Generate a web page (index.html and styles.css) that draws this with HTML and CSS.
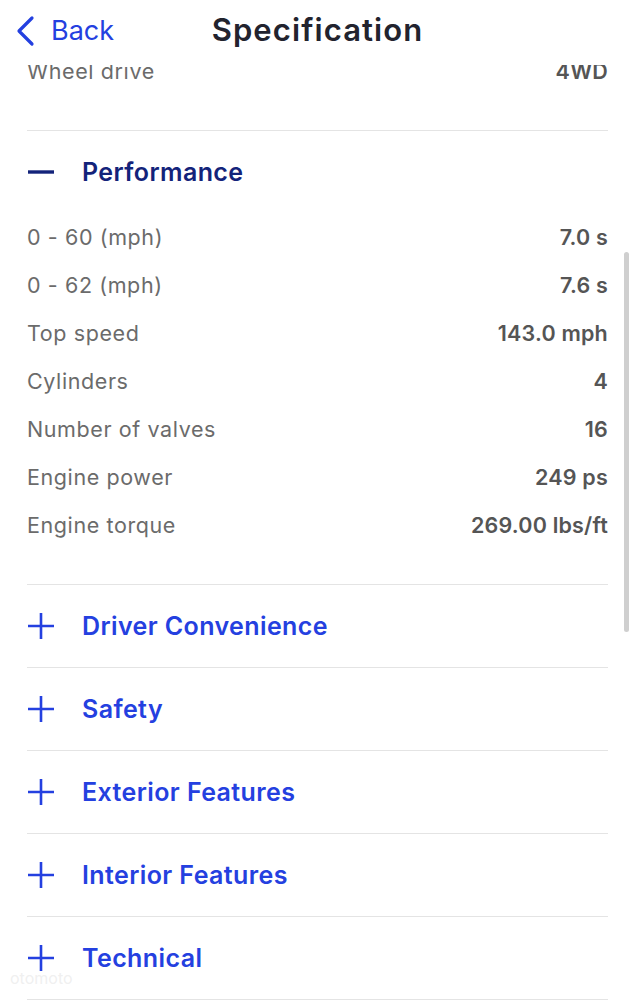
FILE: index.html
```html
<!DOCTYPE html>
<html lang="en">
<head>
  <meta charset="UTF-8">
  <title>Specification</title>
  <link rel="stylesheet" href="styles.css">
</head>
<body>

  <!-- top bar -->
  <div class="topbar">
    <a class="back" href="#">
      <svg width="22" height="32" viewBox="0 0 22 32"><path d="M18 3 L5 16 L18 29" fill="none" stroke="#2440e0" stroke-width="3.2" stroke-linecap="round" stroke-linejoin="round"/></svg>
      <span>Back</span>
    </a>
    <h1>Specification</h1>
  </div>

  <div class="content">
    <div class="list">

      <div class="section">
        <div class="rows">
          <div class="row"><span>Wheel drive</span><b>4WD</b></div>
        </div>
      </div>

      <div class="section open">
        <div class="head">
          <svg class="icon" width="28" height="28" viewBox="0 0 28 28"><path d="M1 14 H27" stroke="#13237a" stroke-width="3.4"/></svg>
          <span>Performance</span>
        </div>
        <div class="rows">
          <div class="row"><span>0 - 60 (mph)</span><b>7.0 s</b></div>
          <div class="row"><span>0 - 62 (mph)</span><b>7.6 s</b></div>
          <div class="row"><span>Top speed</span><b>143.0 mph</b></div>
          <div class="row"><span>Cylinders</span><b>4</b></div>
          <div class="row"><span>Number of valves</span><b>16</b></div>
          <div class="row"><span>Engine power</span><b>249 ps</b></div>
          <div class="row"><span>Engine torque</span><b>269.00 lbs/ft</b></div>
        </div>
      </div>

      <div class="section">
        <div class="head">
          <svg class="icon" width="28" height="28" viewBox="0 0 28 28"><path d="M1 14 H27 M14 1 V27" stroke="#2440e0" stroke-width="2.6"/></svg>
          <span>Driver Convenience</span>
        </div>
      </div>

      <div class="section">
        <div class="head">
          <svg class="icon" width="28" height="28" viewBox="0 0 28 28"><path d="M1 14 H27 M14 1 V27" stroke="#2440e0" stroke-width="2.6"/></svg>
          <span>Safety</span>
        </div>
      </div>

      <div class="section">
        <div class="head">
          <svg class="icon" width="28" height="28" viewBox="0 0 28 28"><path d="M1 14 H27 M14 1 V27" stroke="#2440e0" stroke-width="2.6"/></svg>
          <span>Exterior Features</span>
        </div>
      </div>

      <div class="section">
        <div class="head">
          <svg class="icon" width="28" height="28" viewBox="0 0 28 28"><path d="M1 14 H27 M14 1 V27" stroke="#2440e0" stroke-width="2.6"/></svg>
          <span>Interior Features</span>
        </div>
      </div>

      <div class="section">
        <div class="head">
          <svg class="icon" width="28" height="28" viewBox="0 0 28 28"><path d="M1 14 H27 M14 1 V27" stroke="#2440e0" stroke-width="2.6"/></svg>
          <span>Technical</span>
        </div>
      </div>

    </div>
    <div class="scrollbar"></div>
    <div class="watermark">otomoto</div>
  </div>

</body>
</html>
```

FILE: styles.css
```css
body {
  margin: 0;
  padding: 0;
  background: white;
  font-family: 'Inter', 'Noto Sans', sans-serif;
  overflow: hidden;
}
.topbar {
  position: relative;
  height: 65px;
  background: white;
  display: flex;
  justify-content: center;
  z-index: 2;
}
.back {
  position: absolute;
  left: 14px;
  top: 14px;
  display: flex;
  align-items: center;
  gap: 15px;
  color: #2440e0;
  text-decoration: none;
  font-size: 27px;
}
.topbar h1 {
  margin: 11px 0 0;
  font-size: 31px;
  line-height: 38px;
  font-weight: 600;
  color: #22232e;
  letter-spacing: 1.1px;
}
.content {
  position: relative;
  height: 935px;
  overflow: hidden;
}
.list {
  margin-top: -18px;
  padding: 0 27px;
}
.section {
  border-bottom: 1px solid #e4e4e4;
}
.head {
  height: 82px;
  display: flex;
  align-items: center;
  gap: 27px;
  font-size: 25px;
  font-weight: 600;
  letter-spacing: 0.4px;
  color: #2440e0;
}
.section.open .head {
  color: #13237a;
}
.rows {
  padding-bottom: 35px;
}
.row {
  height: 48px;
  display: flex;
  align-items: center;
  justify-content: space-between;
  font-size: 21.5px;
  color: #6b6b6b;
}
.row span {
  letter-spacing: 0.6px;
}
.row b {
  font-weight: 600;
  letter-spacing: 0.2px;
  color: #555;
}
.scrollbar {
  position: absolute;
  right: 6px;
  top: 187px;
  width: 5px;
  height: 380px;
  border-radius: 3px;
  background: #cfcfcf;
}
.watermark {
  position: absolute;
  left: 10px;
  bottom: 12px;
  font-size: 16px;
  color: rgba(225, 225, 225, 0.5);
}
```
